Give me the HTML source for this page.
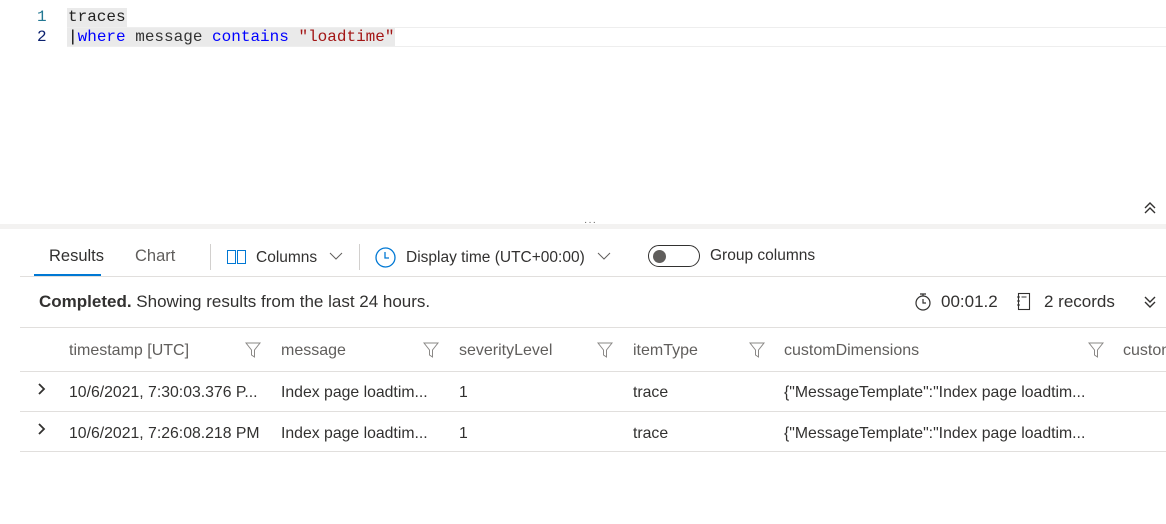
<!DOCTYPE html>
<html><head><style>
*{margin:0;padding:0;box-sizing:border-box}
body{width:1166px;height:524px;background:#fff;position:relative;overflow:hidden;font-family:"Segoe UI","Liberation Sans",sans-serif;color:#323130}
.a{position:absolute;white-space:nowrap}
.mono{font-family:"Liberation Mono",monospace;font-size:16px;line-height:20px}
.ln{color:#237893}
.t{font-size:15.8px;color:#323130}
.h{font-size:16px;color:#605e5c}
.hl{position:absolute;height:1px;background:#e1dfdd}
svg{position:absolute}
</style></head><body>
<!-- editor -->
<div class="a" style="left:67px;top:8px;width:60px;height:19px;background:#eaeaea"></div>
<div class="a" style="left:67px;top:27px;width:1099px;height:20px;border-top:1px solid #eee;border-bottom:1px solid #eee"></div>
<div class="a" style="left:67px;top:28px;width:328px;height:18px;background:#eaeaea"></div>
<div class="a mono ln" style="left:37px;top:7px">1</div>
<div class="a mono" style="left:37px;top:27px;color:#0b216f">2</div>
<div class="a mono" style="left:68px;top:7px;color:#222">traces</div>
<div class="a mono" style="left:68px;top:27px;color:#333"><span style="color:#000">|</span><span style="color:#00f">where</span> message <span style="color:#00f">contains</span> <span style="color:#a31515">"loadtime"</span></div>
<!-- splitter -->
<div class="a" style="left:0;top:224px;width:1166px;height:5px;background:#f3f2f1"></div>
<div class="a" style="left:584px;top:217px;font-size:10px;color:#605e5c;letter-spacing:1px">···</div>
<svg style="left:1143px;top:201px" width="14" height="14" viewBox="0 0 14 14"><path d="M2 7 L7 2 L12 7 M2 12 L7 7 L12 12" fill="none" stroke="#323130" stroke-width="1.4"/></svg>
<!-- toolbar -->
<div class="a" style="left:49px;top:247px;font-size:16.5px;color:#323130">Results</div>
<div class="a" style="left:34px;top:274px;width:67px;height:3px;background:#0078d4"></div>
<div class="a" style="left:135px;top:247px;font-size:16.5px;color:#605e5c">Chart</div>
<div class="a" style="left:210px;top:244px;width:1px;height:26px;background:#d2d0ce"></div>
<svg style="left:227px;top:250px" width="20" height="15"><rect x="0.5" y="0.5" width="8" height="13" fill="none" stroke="#0078d4"/><rect x="10.5" y="0.5" width="8" height="13" fill="none" stroke="#0078d4"/></svg>
<div class="a" style="left:256px;top:249px;font-size:15.5px;color:#323130">Columns</div>
<svg style="left:329px;top:252px" width="14" height="9"><path d="M1 1 L7 7 L13 1" fill="none" stroke="#605e5c"/></svg>
<div class="a" style="left:359px;top:244px;width:1px;height:26px;background:#d2d0ce"></div>
<svg style="left:375px;top:247px" width="21" height="21"><circle cx="10.5" cy="10.5" r="9.5" fill="none" stroke="#0078d4" stroke-width="1.3"/><path d="M10 5 V11 H14" fill="none" stroke="#0078d4" stroke-width="1.3"/></svg>
<div class="a" style="left:406px;top:249px;font-size:15.5px;color:#323130">Display time (UTC+00:00)</div>
<svg style="left:597px;top:252px" width="14" height="9"><path d="M1 1 L7 7 L13 1" fill="none" stroke="#605e5c"/></svg>
<div class="a" style="left:648px;top:245px;width:52px;height:22px;border:1px solid #323130;border-radius:11px"></div>
<div class="a" style="left:653px;top:250px;width:13px;height:13px;border-radius:50%;background:#605e5c"></div>
<div class="a" style="left:710px;top:247px;font-size:15.5px;color:#323130">Group columns</div>
<div class="hl" style="left:20px;top:276px;width:1146px"></div>
<!-- status -->
<div class="a" style="left:39px;top:292px;font-size:17px;color:#323130"><b style="font-weight:600">Completed.</b> Showing results from the last 24 hours.</div>
<svg style="left:914px;top:292px" width="18" height="20"><circle cx="9" cy="11" r="7" fill="none" stroke="#323130" stroke-width="1.2"/><path d="M6 2 H12 M9 2 V4 M9 7 V11 H12" fill="none" stroke="#323130" stroke-width="1.2"/></svg>
<div class="a" style="left:941px;top:292px;font-size:17px">00:01.2</div>
<svg style="left:1016px;top:292px" width="16" height="20"><rect x="2.5" y="1.5" width="11" height="16" fill="none" stroke="#323130" stroke-width="1.1"/><path d="M5.5 5 H10.5 M1 5 H4 M1 9 H4 M1 13 H4" stroke="#323130"/></svg>
<div class="a" style="left:1044px;top:292px;font-size:17px">2 records</div>
<svg style="left:1143px;top:295px" width="14" height="14"><path d="M2 2 L7 7 L12 2 M2 7 L7 12 L12 7" fill="none" stroke="#323130" stroke-width="1.4"/></svg>
<div class="hl" style="left:20px;top:327px;width:1146px"></div>
<!-- header -->
<div class="a h" style="left:69px;top:342px">timestamp [UTC]</div>
<div class="a h" style="left:281px;top:342px">message</div>
<div class="a h" style="left:459px;top:342px">severityLevel</div>
<div class="a h" style="left:633px;top:342px">itemType</div>
<div class="a h" style="left:784px;top:342px">customDimensions</div>
<div class="a h" style="left:1123px;top:342px">custom</div>
<svg style="left:245px;top:342px" width="16" height="16"><path d="M1 1 H15 L9.5 8 V15 L6.5 13 V8 Z" fill="none" stroke="#8a8886"/></svg>
<svg style="left:423px;top:342px" width="16" height="16"><path d="M1 1 H15 L9.5 8 V15 L6.5 13 V8 Z" fill="none" stroke="#8a8886"/></svg>
<svg style="left:597px;top:342px" width="16" height="16"><path d="M1 1 H15 L9.5 8 V15 L6.5 13 V8 Z" fill="none" stroke="#8a8886"/></svg>
<svg style="left:749px;top:342px" width="16" height="16"><path d="M1 1 H15 L9.5 8 V15 L6.5 13 V8 Z" fill="none" stroke="#8a8886"/></svg>
<svg style="left:1088px;top:342px" width="16" height="16"><path d="M1 1 H15 L9.5 8 V15 L6.5 13 V8 Z" fill="none" stroke="#8a8886"/></svg>
<div class="hl" style="left:20px;top:371px;width:1146px"></div>
<!-- rows -->
<svg style="left:37px;top:383px" width="9" height="12"><path d="M2 1 L7 6 L2 11" fill="none" stroke="#323130" stroke-width="1.8"/></svg>
<div class="a t" style="left:69px;top:384px">10/6/2021, 7:30:03.376 P...</div>
<div class="a t" style="left:281px;top:384px">Index page loadtim...</div>
<div class="a t" style="left:459px;top:384px">1</div>
<div class="a t" style="left:633px;top:384px">trace</div>
<div class="a t" style="left:784px;top:384px">{"MessageTemplate":"Index page loadtim...</div>
<div class="hl" style="left:20px;top:411px;width:1146px"></div>
<svg style="left:37px;top:423px" width="9" height="12"><path d="M2 1 L7 6 L2 11" fill="none" stroke="#323130" stroke-width="1.8"/></svg>
<div class="a t" style="left:69px;top:425px">10/6/2021, 7:26:08.218 PM</div>
<div class="a t" style="left:281px;top:425px">Index page loadtim...</div>
<div class="a t" style="left:459px;top:425px">1</div>
<div class="a t" style="left:633px;top:425px">trace</div>
<div class="a t" style="left:784px;top:425px">{"MessageTemplate":"Index page loadtim...</div>
<div class="hl" style="left:20px;top:451px;width:1146px"></div>
</body></html>
